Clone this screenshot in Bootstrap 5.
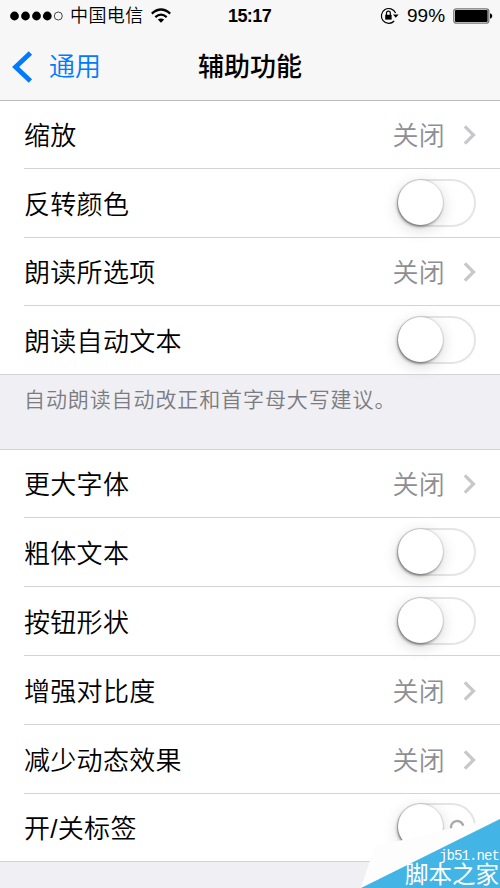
<!DOCTYPE html>
<html lang="zh-CN">
<head>
<meta charset="utf-8">
<meta name="viewport" content="width=device-width, initial-scale=1">
<title>辅助功能</title>
<link href="https://cdn.jsdelivr.net/npm/bootstrap@5.3.0/dist/css/bootstrap.min.css" rel="stylesheet">
<style>
body{font-family:"Liberation Sans","Noto Sans CJK SC",sans-serif;background:#efeff4;color:#000;width:500px;height:888px;overflow:hidden}
.top-area{height:101px;background:#f7f7f7;border-bottom:1px solid #b9b9bb}
.status-line{height:32px;font-size:18px;line-height:32px}
.status-line>*,.title-line>*{white-space:nowrap}
.dots{margin-left:10px;width:54px}
.carrier{margin-left:6px;width:76px;font-size:18px;font-weight:350;letter-spacing:.4px}
.wifi{margin-left:4px}
.clock{margin-left:56px;width:60px;font-weight:700;font-size:18px;letter-spacing:-.6px}
.lock{margin-left:92px}
.percent{margin-left:7px;width:42px;font-size:19px}
.battery{margin-left:4px}
.title-line{height:68px;padding-top:3px}
.back-link{color:#007aff;font-size:26px;font-weight:350;width:198px;padding-left:12px}
.back-link svg{margin-top:-2px}
.back-link span{margin-left:16px}
.page-title{font-size:26px;font-weight:500}
.settings{background:#fff;font-size:26px}
.setting{height:69px;padding-left:24px}
.setting.short{height:68px}
.setting-body{font-weight:350;letter-spacing:.3px;line-height:1;padding-right:24px;position:relative}
.setting-body>span{padding-top:2px}
.setting-body::after{content:"";position:absolute;left:0;right:0;bottom:0;height:1px;background:#d3d3d7}
.setting:last-child .setting-body::after{left:-24px}
.state{color:#8e8e93;margin-right:18px}
.toggle{width:79px;height:48px;border:2.5px solid #e5e5e5;border-radius:25px;margin-bottom:2px}
.knob{width:45px;height:45px;margin:-1px 0 0 -1px;border-radius:50%;background:#fff;box-shadow:0 0 1px 1px rgba(0,0,0,.1),-1px 2px 3px rgba(0,0,0,.34),0 4px 16px rgba(0,0,0,.16)}
.note{height:75px;padding:9px 24px 0;color:#7b7b80;font-size:21px;font-weight:350;letter-spacing:.9px;line-height:31px;border-bottom:1px solid #d3d3d7}
.stamp{position:absolute;left:360px;top:810px;width:140px;height:78px}
.stamp svg{position:absolute;left:0;top:0}
.stamp-text{position:absolute;right:1px;top:39px;color:#fff;text-align:right;white-space:nowrap}
.stamp-site{font:14px/14px "Liberation Mono",monospace;letter-spacing:-.9px}
.stamp-name{font-size:23.5px;line-height:25px;font-weight:400}
</style>
<script src="https://cdn.jsdelivr.net/npm/bootstrap@5.3.0/dist/js/bootstrap.bundle.min.js"></script>
</head>
<body class="position-relative">
<header class="top-area">
  <div class="status-line d-flex align-items-center">
    <svg class="dots flex-shrink-0" height="12" viewBox="0 0 54 12"><circle cx="4.5" cy="6" r="4.4"/><circle cx="15.5" cy="6" r="4.4"/><circle cx="26.5" cy="6" r="4.4"/><circle cx="37.3" cy="6" r="4.4"/><circle cx="48.3" cy="6" r="4" fill="none" stroke="#333" stroke-width=".9"/></svg>
    <span class="carrier flex-shrink-0">中国电信</span>
    <svg class="wifi flex-shrink-0" width="22" height="16" viewBox="0 0 22 16"><g fill="none" stroke="#000" stroke-width="2.2"><path d="M1.8 5.6Q11-2.6 20.2 5.6"/><path d="M5.3 9.2Q11 4.2 16.7 9.2"/></g><path d="M7.8 11.6Q11 9.3 14.2 11.6L11 14.8Z"/></svg>
    <span class="clock flex-shrink-0">15:17</span>
    <svg class="lock flex-shrink-0" width="20" height="18" viewBox="0 0 20 18"><path d="M15.6 6A7.4 7.4 0 1 0 14.2 14" fill="none" stroke="#000" stroke-width="1.2"/><path d="M13 7.4H18.6L15.8 10.8Z"/><rect x="5.2" y="7.8" width="6.4" height="4.8"/><path d="M6.5 8V6a1.9 1.9 0 0 1 3.8 0v2" fill="none" stroke="#000" stroke-width="1.2"/></svg>
    <span class="percent flex-shrink-0">99%</span>
    <svg class="battery flex-shrink-0" width="40" height="16" viewBox="0 0 40 16"><rect x=".8" y=".8" width="35" height="14.4" rx="2.5" fill="none" stroke="#777" stroke-width="1.3"/><rect x="2" y="2" width="32.6" height="12" rx="1"/><path d="M37 5.2Q39.3 5.8 39.3 8T37 10.8Z"/></svg>
  </div>
  <nav class="title-line d-flex align-items-center" aria-label="标题">
    <a class="back-link d-flex align-items-center text-decoration-none" href="#"><svg width="21" height="32" viewBox="0 0 21 32"><path d="M18.4 2L3.6 16L18.4 30" fill="none" stroke="#007aff" stroke-width="4.8"/></svg><span>通用</span></a>
    <h1 class="page-title mb-0">辅助功能</h1>
  </nav>
</header>
<main>
  <section class="settings">
    <div class="setting short"><div class="setting-body d-flex align-items-center h-100"><span class="me-auto">缩放</span><span class="state">关闭</span><svg width="13" height="20" viewBox="0 0 13 20"><path d="M1.8 1.3L10.5 10L1.8 18.7" fill="none" stroke="#c7c7cc" stroke-width="3.2"/></svg></div></div>
    <div class="setting"><div class="setting-body d-flex align-items-center h-100"><span class="me-auto">反转颜色</span><div class="toggle"><div class="knob"></div></div></div></div>
    <div class="setting short"><div class="setting-body d-flex align-items-center h-100"><span class="me-auto">朗读所选项</span><span class="state">关闭</span><svg width="13" height="20" viewBox="0 0 13 20"><path d="M1.8 1.3L10.5 10L1.8 18.7" fill="none" stroke="#c7c7cc" stroke-width="3.2"/></svg></div></div>
    <div class="setting"><div class="setting-body d-flex align-items-center h-100"><span class="me-auto">朗读自动文本</span><div class="toggle"><div class="knob"></div></div></div></div>
  </section>
  <p class="note mb-0">自动朗读自动改正和首字母大写建议。</p>
  <section class="settings">
    <div class="setting short"><div class="setting-body d-flex align-items-center h-100"><span class="me-auto">更大字体</span><span class="state">关闭</span><svg width="13" height="20" viewBox="0 0 13 20"><path d="M1.8 1.3L10.5 10L1.8 18.7" fill="none" stroke="#c7c7cc" stroke-width="3.2"/></svg></div></div>
    <div class="setting"><div class="setting-body d-flex align-items-center h-100"><span class="me-auto">粗体文本</span><div class="toggle"><div class="knob"></div></div></div></div>
    <div class="setting"><div class="setting-body d-flex align-items-center h-100"><span class="me-auto">按钮形状</span><div class="toggle"><div class="knob"></div></div></div></div>
    <div class="setting"><div class="setting-body d-flex align-items-center h-100"><span class="me-auto">增强对比度</span><span class="state">关闭</span><svg width="13" height="20" viewBox="0 0 13 20"><path d="M1.8 1.3L10.5 10L1.8 18.7" fill="none" stroke="#c7c7cc" stroke-width="3.2"/></svg></div></div>
    <div class="setting"><div class="setting-body d-flex align-items-center h-100"><span class="me-auto">减少动态效果</span><span class="state">关闭</span><svg width="13" height="20" viewBox="0 0 13 20"><path d="M1.8 1.3L10.5 10L1.8 18.7" fill="none" stroke="#c7c7cc" stroke-width="3.2"/></svg></div></div>
    <div class="setting short"><div class="setting-body d-flex align-items-center h-100"><span class="me-auto">开/关标签</span><div class="toggle"><div class="knob"></div></div></div></div>
  </section>
</main>
<aside class="stamp">
  <svg width="140" height="78" viewBox="0 0 140 78"><path d="M91.5 20A6.3 6.3 0 1 1 103.5 17.5" fill="none" stroke="#aaa" stroke-width="2.4"/><path d="M1 78L15 35.5L43 30L83 20L116 13L140 8V78Z" fill="#fdfdfd"/><path d="M1 78L140 9V78Z" fill="#42b4e6"/></svg>
  <div class="stamp-text"><div class="stamp-site">jb51.net</div><div class="stamp-name">脚本之家</div></div>
</aside>
</body>
</html>
